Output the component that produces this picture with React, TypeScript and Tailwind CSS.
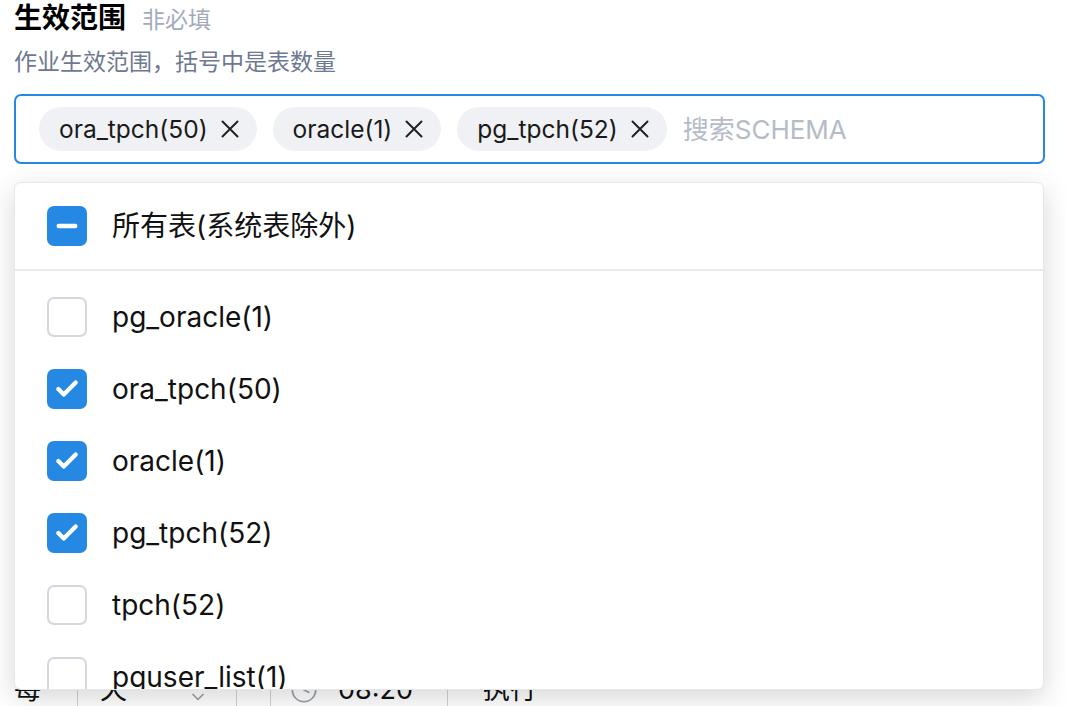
import { Check, Minus, ChevronDown, Clock } from 'lucide-react';

const tags = ['ora_tpch(50)', 'oracle(1)', 'pg_tpch(52)'];

const schemas = [
  { name: 'pg_oracle(1)', checked: false },
  { name: 'ora_tpch(50)', checked: true },
  { name: 'oracle(1)', checked: true },
  { name: 'pg_tpch(52)', checked: true },
  { name: 'tpch(52)', checked: false },
  { name: 'pguser_list(1)', checked: false },
];

function Box({ checked }: { checked: boolean }) {
  if (checked) {
    return (
      <span className="flex h-[40px] w-[40px] shrink-0 items-center justify-center rounded-[7px] bg-[#2589e3]">
        <Check className="h-[26px] w-[26px] text-white" strokeWidth={4} />
      </span>
    );
  }
  return <span className="h-[40px] w-[40px] shrink-0 rounded-[7px] border-2 border-[#d3d8df] bg-white" />;
}

function CloseIcon() {
  return (
    <svg width="18" height="18" viewBox="0 0 18 18" className="shrink-0 text-[#222]">
      <path d="M1.5 1.5 L16.5 16.5 M16.5 1.5 L1.5 16.5" stroke="currentColor" strokeWidth="2" strokeLinecap="round" />
    </svg>
  );
}

export default function App() {
  return (
    <div
      className="relative h-[706px] w-[1066px] overflow-hidden bg-white px-[14px] text-[#111]"
      style={{ fontFamily: 'Inter, "Noto Sans CJK SC", sans-serif' }}
    >
      {/* Label */}
      <div className="flex items-baseline gap-[16px] pt-[1px]">
        <span className="text-[28px] leading-[34px] font-bold text-black">生效范围</span>
        <span className="text-[23px] leading-[34px] text-[#a3aabb]">非必填</span>
      </div>
      <div className="mt-[9px] text-[23px] leading-[32px] text-[#6e7891]">作业生效范围，括号中是表数量</div>

      {/* Select */}
      <div className="relative mt-[16px] w-[1031px]">
        <div className="flex h-[70px] items-center gap-[16px] rounded-[7px] border-2 border-[#2589e3] bg-white pl-[23px]">
          {tags.map(t => (
            <span
              key={t}
              className="flex h-[44px] items-center gap-[13px] rounded-full bg-[#f0f1f4] pl-[20px] pr-[18px] text-[24.5px] text-[#1a1a1a]"
            >
              {t}
              <CloseIcon />
            </span>
          ))}
          <span className="text-[26px] text-[#b5bcc7]">搜索SCHEMA</span>
        </div>

        {/* Dropdown */}
        <div className="absolute left-0 top-[88px] z-10 h-[508px] w-[1030px] overflow-hidden rounded-[7px] border border-[#e6e7eb] bg-white shadow-[0_8px_28px_rgba(0,0,0,0.16)]">
          <div className="flex h-[88px] items-center gap-[25px] border-b-2 border-[#e9eaee] pl-[32px]">
            <span className="flex h-[40px] w-[40px] shrink-0 items-center justify-center rounded-[7px] bg-[#2589e3]">
              <Minus className="h-[28px] w-[28px] text-white" strokeWidth={4} />
            </span>
            <span className="text-[28px] text-[#111]">所有表(系统表除外)</span>
          </div>
          <div className="pt-[10px]">
            {schemas.map(s => (
              <div key={s.name} className="flex h-[72px] items-center gap-[25px] pl-[32px]">
                <Box checked={s.checked} />
                <span className="text-[28px] text-[#111]">{s.name}</span>
              </div>
            ))}
          </div>
        </div>
      </div>

      {/* Schedule row (under the dropdown) */}
      <div className="mt-[498px] flex h-[56px] items-center text-[27px] text-[#111]">
        <span className="w-[63px]">每</span>
        <div className="flex h-[56px] w-[160px] items-center justify-between border-x border-[#cfd3d9] pl-[22px] pr-[28px]">
          <span>天</span>
          <ChevronDown className="mt-[14px] h-[20px] w-[20px] text-[#9aa1ab]" />
        </div>
        <div className="ml-[33px] flex h-[56px] w-[178px] items-center gap-[20px] border-x border-[#cfd3d9] pl-[19px]">
          <Clock className="h-[28px] w-[28px] text-[#9aa1ab]" strokeWidth={1.5} />
          <span>08:20</span>
        </div>
        <span className="ml-[35px]">执行</span>
      </div>
    </div>
  );
}
